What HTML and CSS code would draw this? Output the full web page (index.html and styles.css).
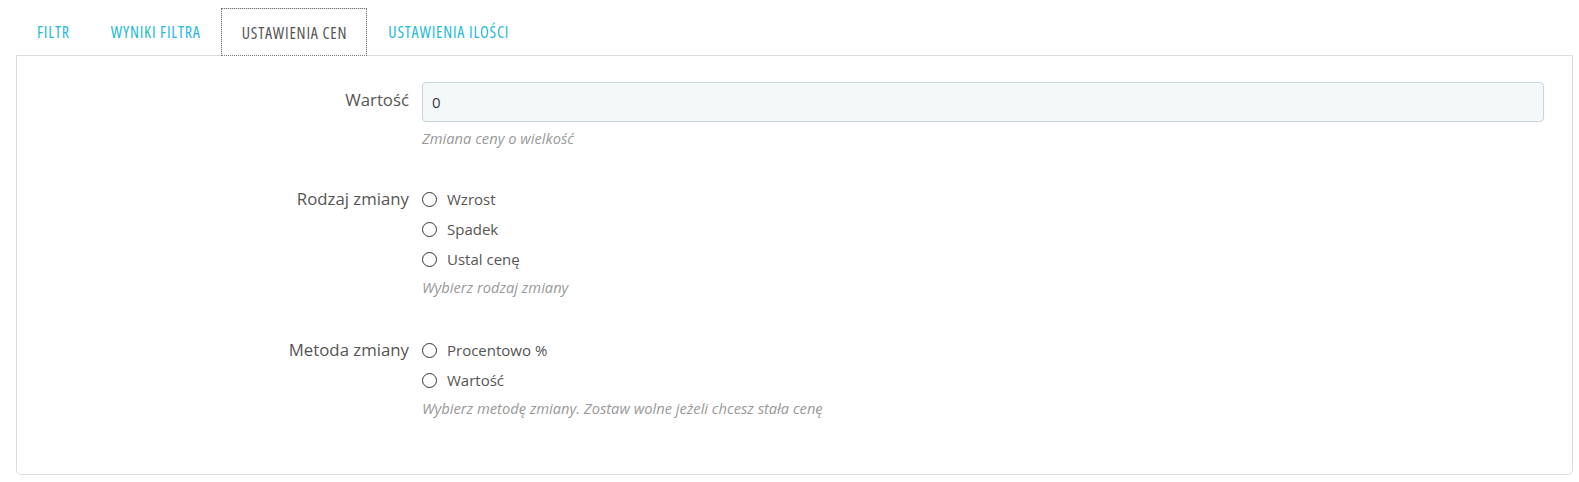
FILE: index.html
```html
<!DOCTYPE html>
<html lang="pl">
<head>
    <meta charset="UTF-8">
    <title>Ustawienia cen</title>
    <link rel="stylesheet" href="styles.css">
</head>
<body>
    <ul class="nav-tabs">
        <li><a href="#">Filtr</a></li>
        <li><a href="#">Wyniki filtra</a></li>
        <li class="active"><a href="#">Ustawienia cen</a></li>
        <li><a href="#">Ustawienia ilości</a></li>
    </ul>

    <div class="panel">
        <div class="form-group">
            <label class="control-label">Wartość</label>
            <div class="control">
                <input type="text" class="form-input" value="0">
                <p class="help">Zmiana ceny o wielkość</p>
            </div>
        </div>

        <div class="form-group">
            <label class="control-label">Rodzaj zmiany</label>
            <div class="control">
                <label class="radio"><span class="circle"></span>Wzrost</label>
                <label class="radio"><span class="circle"></span>Spadek</label>
                <label class="radio"><span class="circle"></span>Ustal cenę</label>
                <p class="help">Wybierz rodzaj zmiany</p>
            </div>
        </div>

        <div class="form-group">
            <label class="control-label">Metoda zmiany</label>
            <div class="control">
                <label class="radio"><span class="circle"></span>Procentowo %</label>
                <label class="radio"><span class="circle"></span>Wartość</label>
                <p class="help">Wybierz metodę zmiany. Zostaw wolne jeżeli chcesz stała cenę</p>
            </div>
        </div>
    </div>
</body>
</html>
```

FILE: styles.css
```css
body {
    margin: 0;
    padding: 8px 6px 0 16px;
    font-family: 'Open Sans', sans-serif;
    font-size: 15px;
    color: #555;
    background-color: #fff;
}

.nav-tabs {
    list-style: none;
    margin: 0;
    padding: 0;
    display: flex;
    height: 47px;
}

.nav-tabs li {
    display: flex;
}

.nav-tabs a {
    display: flex;
    align-items: center;
    padding: 0 19px 0 20px;
    font-family: 'Open Sans', sans-serif;
    font-stretch: 75%;
    font-size: 16px;
    letter-spacing: 0.8px;
    text-transform: uppercase;
    text-decoration: none;
    color: #25b9d7;
    border: 1px solid transparent;
    border-bottom: none;
}

.nav-tabs li.active a {
    color: #555;
    background-color: #fff;
    border-color: #ddd;
    outline: 1px dotted #777;
    outline-offset: -1px;
    position: relative;
    z-index: 1;
    height: 48px;
    box-sizing: border-box;
}

.panel {
    border: 1px solid #dcdcdc;
    border-radius: 0 0 5px 5px;
    padding: 26px 28px 31px 0;
    height: 361px;
}

.form-group {
    display: grid;
    grid-template-columns: 392px 1fr;
    column-gap: 13px;
    margin-bottom: 41px;
}

.control-label {
    text-align: right;
    padding-top: 8px;
    line-height: 22px;
    font-size: 16.8px;
    margin-top: -1px;
}

.form-group:not(:first-child) .control-label {
    padding-top: 0;
}

.form-input {
    display: block;
    width: 100%;
    height: 40px;
    box-sizing: border-box;
    padding: 0 9px;
    font-family: 'Open Sans', sans-serif;
    font-size: 15px;
    color: #363a41;
    background-color: #f5f8f9;
    border: 1px solid #c7d6db;
    border-radius: 4px;
}

.help {
    margin: 6px 0 0;
    font-size: 14.7px;
    font-style: italic;
    color: #999;
    line-height: 20px;
}

.control .radio + .help {
    margin: 8px 0 2px;
}

.radio {
    display: flex;
    align-items: center;
    height: 20px;
    margin-bottom: 10px;
}

.radio:last-of-type {
    margin-bottom: 0;
}

.circle {
    width: 15px;
    height: 15px;
    border: 1.2px solid #333;
    border-radius: 50%;
    margin-right: 10px;
    box-sizing: border-box;
}
```
